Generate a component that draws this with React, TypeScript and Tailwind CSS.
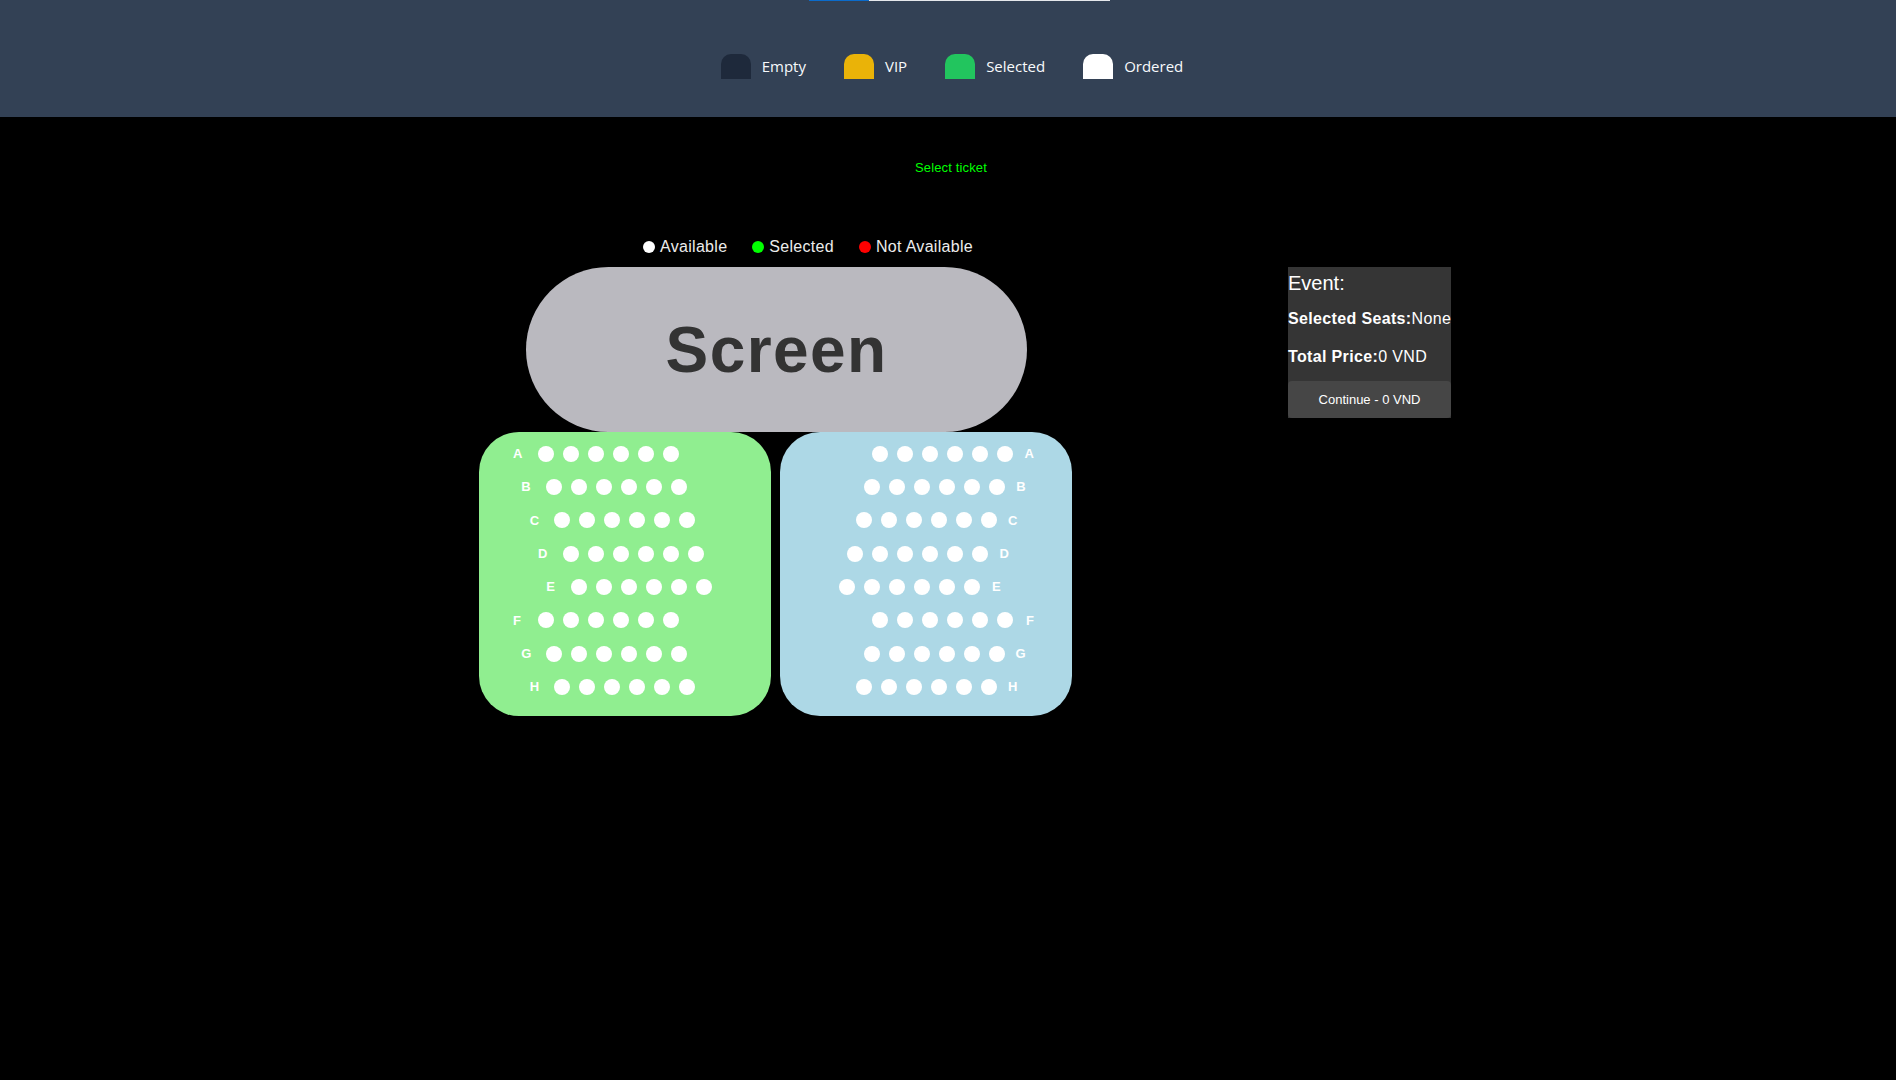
const seatTypes = [
  { label: "Empty", color: "bg-[#1e293b]" },
  { label: "VIP", color: "bg-[#eab308]" },
  { label: "Selected", color: "bg-[#22c55e]" },
  { label: "Ordered", color: "bg-white" },
];

const statusDots = [
  { label: "Available", color: "bg-white" },
  { label: "Selected", color: "bg-[#00ff00]" },
  { label: "Not Available", color: "bg-[#ff0000]" },
];

const rows = ["A", "B", "C", "D", "E", "F", "G", "H"];

// each row is pushed a little further in, repeating after E
const leftShift = ["ml-0", "ml-[8.33px]", "ml-[16.67px]", "ml-[25px]", "ml-[33.33px]"];
const rightShift = ["mr-0", "mr-[8.33px]", "mr-[16.67px]", "mr-[25px]", "mr-[33.33px]"];

const Seats = () => (
  <div className="flex gap-[9px]">
    {Array.from({ length: 6 }).map((_, i) => (
      <span key={i} className="w-[16px] h-[16px] rounded-full bg-white" />
    ))}
  </div>
);

const Section = ({ side }: { side: "left" | "right" }) => {
  const isLeft = side === "left";
  return (
    <div
      className={`w-[292px] h-[284px] rounded-[40px] pt-[5px] flex flex-col ${
        isLeft ? "bg-[#90ee90] items-start pl-[34px]" : "bg-[#add8e6] items-end pr-[38px]"
      }`}
    >
      {rows.map((row, i) => (
        <div
          key={row}
          className={`h-[33.33px] flex items-center ${
            isLeft ? leftShift[i % 5] : rightShift[i % 5]
          }`}
        >
          {isLeft ? (
            <>
              <span className="w-[24.5px] text-[13px] font-bold text-white">{row}</span>
              <Seats />
            </>
          ) : (
            <>
              <Seats />
              <span className="w-[20.7px] text-right text-[13px] font-bold text-white">{row}</span>
            </>
          )}
        </div>
      ))}
    </div>
  );
};

export default function App() {
  return (
    <div className="min-h-[1080px] bg-black font-['Liberation_Sans',Arial,sans-serif]">
      {/* Header with seat type legend */}
      <header className="h-[117px] bg-[#334155] flex flex-col">
        <div className="flex justify-center pl-[23px]">
          <div className="flex h-px w-[301px]">
            <div className="w-[60px] bg-[#0b6bcb]" />
            <div className="flex-1 bg-[#e5e7eb]" />
          </div>
        </div>
        <div className="mt-[53px] flex justify-center items-center gap-[38px] pl-[8px] font-['Open_Sans',sans-serif]">
          {seatTypes.map((t) => (
            <div key={t.label} className="flex items-center gap-[11px]">
              <span className={`w-[30px] h-[25px] rounded-t-[10px] ${t.color}`} />
              <span className="text-[15px] text-[#f8fafc]">{t.label}</span>
            </div>
          ))}
        </div>
      </header>

      <main>
        <p className="pt-[43px] pl-[6px] text-center text-[13px] leading-[15px] tracking-[0.15px] text-[#00ff00]">
          Select ticket
        </p>

        <div className="flex mt-[63px]">
          {/* Seating area */}
          <div className="ml-[479px] w-[593px] flex flex-col items-start">
            <div className="ml-[164px] h-[18px] flex items-center gap-[25px] text-[16px] leading-[18px] tracking-[0.3px] text-[#ececec]">
              {statusDots.map((d) => (
                <div key={d.label} className="flex items-center gap-[5px]">
                  <span className={`w-[12px] h-[12px] rounded-full ${d.color}`} />
                  <span>{d.label}</span>
                </div>
              ))}
            </div>

            <div className="mt-[11px] ml-[47px] w-[501px] h-[165px] rounded-full bg-[#bab9bf] flex items-center justify-center">
              <span className="text-[64px] font-bold tracking-[1.4px] text-[#333333]">Screen</span>
            </div>

            <div className="flex gap-[9px]">
              <Section side="left" />
              <Section side="right" />
            </div>
          </div>

          {/* Booking summary */}
          <aside className="ml-[216px] mt-[29px] w-[163px] h-fit bg-[#353535] text-white pt-[5px] flex flex-col">
            <p className="text-[20px] leading-[23px]">Event:</p>
            <p className="mt-[15px] text-[16px] leading-[18px] tracking-[0.35px] whitespace-nowrap">
              <span className="font-bold">Selected Seats:</span>None
            </p>
            <p className="mt-[20px] text-[16px] leading-[18px] tracking-[0.35px] whitespace-nowrap">
              <span className="font-bold">Total Price:</span>0 VND
            </p>
            <button className="mt-[15px] h-[37px] w-full rounded-[4px] bg-[#464646] text-[13px] text-white">
              Continue - 0 VND
            </button>
          </aside>
        </div>
      </main>
    </div>
  );
}
